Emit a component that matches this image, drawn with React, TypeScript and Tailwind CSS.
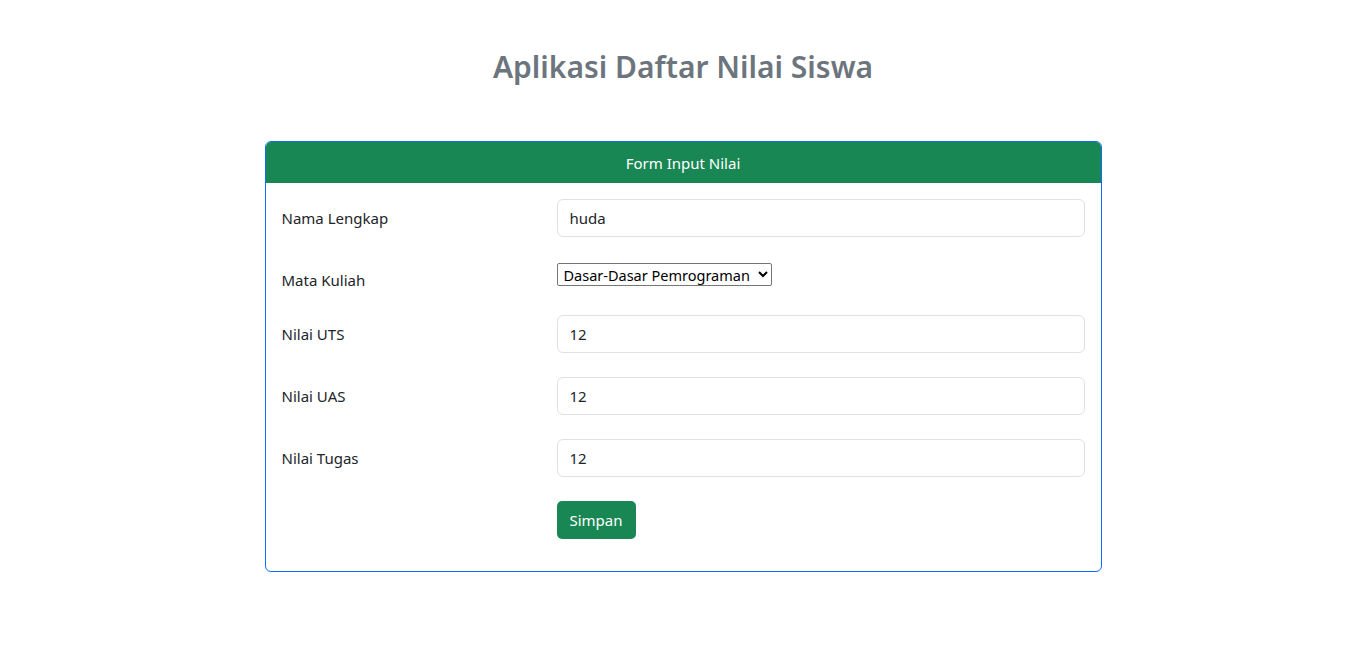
import { useState } from "react";

/* Aplikasi Daftar Nilai Siswa — form input */

const FONT = "font-['Segoe_UI','Noto_Sans','Open_Sans',sans-serif]";

function FieldRow({
  label,
  value,
  onChange,
}: {
  label: string;
  value: string;
  onChange: (v: string) => void;
}) {
  return (
    <div className="flex">
      <label className="w-[275px] pt-[7px] pb-[7px] leading-6">{label}</label>
      <div className="flex-1">
        <input
          type="text"
          value={value}
          onChange={(e) => onChange(e.target.value)}
          className="h-[38px] w-full rounded-[6px] border border-[#dee2e6] bg-white px-3 text-[15px] leading-6 text-[#212529] outline-none"
        />
      </div>
    </div>
  );
}

export default function App() {
  const [nama, setNama] = useState("huda");
  const [matkul, setMatkul] = useState("Dasar-Dasar Pemrograman");
  const [uts, setUts] = useState("12");
  const [uas, setUas] = useState("12");
  const [tugas, setTugas] = useState("12");

  return (
    <div className={`min-h-[655px] bg-white text-[15px] leading-6 text-[#212529] ${FONT}`}>
      <h2 className="pt-[48px] text-center text-[30px] font-semibold leading-[38px] text-[#6c757d]">
        Aplikasi Daftar Nilai Siswa
      </h2>

      {/* Card */}
      <div className="mx-auto mt-[55px] w-[837px] rounded-[6px] border border-[#0d6efd]">
        <div className="flex h-[41px] items-center justify-center rounded-t-[5px] bg-[#198754] text-[15px] text-white">
          Form Input Nilai
        </div>

        <div className="px-4 pt-4 pb-8">
          <FieldRow label="Nama Lengkap" value={nama} onChange={setNama} />

          <div className="mt-6 flex h-[30px]">
            <label className="w-[275px] pt-[7px] leading-6">Mata Kuliah</label>
            <div className="flex-1 pt-[2px]">
              <select
                value={matkul}
                onChange={(e) => setMatkul(e.target.value)}
                className="h-[23px] w-[215px] appearance-auto rounded-[2px] border border-[#767676] bg-white pl-[2px] pr-[1px] text-[14.5px] leading-5 text-black"
              >
                <option>Dasar-Dasar Pemrograman</option>
                <option>Basis Data</option>
                <option>Struktur Data</option>
              </select>
            </div>
          </div>

          <div className="mt-6">
            <FieldRow label="Nilai UTS" value={uts} onChange={setUts} />
          </div>
          <div className="mt-6">
            <FieldRow label="Nilai UAS" value={uas} onChange={setUas} />
          </div>
          <div className="mt-6">
            <FieldRow label="Nilai Tugas" value={tugas} onChange={setTugas} />
          </div>

          <div className="mt-6 flex">
            <div className="w-[275px]" />
            <button
              type="button"
              className="h-[38px] w-[79px] rounded-[5px] bg-[#198754] text-[15px] text-white"
            >
              Simpan
            </button>
          </div>
        </div>
      </div>
    </div>
  );
}
